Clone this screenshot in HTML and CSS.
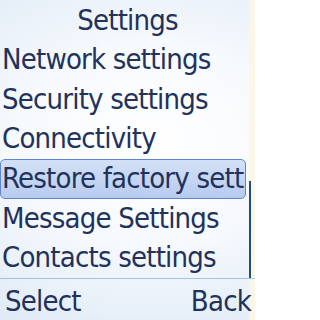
FILE: index.html
```html
<!DOCTYPE html>
<html>
<head>
<meta charset="utf-8">
<link rel="stylesheet" href="styles.css">
</head>
<body>
<div class="screen">
  <div class="title">Settings</div>
  <div class="menu">
    <ul class="list">
      <li class="item">Network settings</li>
      <li class="item">Security settings</li>
      <li class="item">Connectivity</li>
      <li class="item selected">Restore factory sett</li>
      <li class="item">Message Settings</li>
      <li class="item">Contacts settings</li>
    </ul>
    <div class="scroll"><div class="thumb"></div></div>
  </div>
  <div class="softkeys">
    <span class="key">Select</span>
    <span class="key">Back</span>
  </div>
</div>
</body>
</html>
```
FILE: styles.css
```css
html, body {
  margin: 0;
  padding: 0;
}
body {
  width: 255px;
  height: 320px;
  overflow: hidden;
}
.screen {
  width: 255px;
  height: 320px;
  display: flex;
  flex-direction: column;
  font-family: "DejaVu Sans Condensed", "DejaVu Sans", sans-serif;
  font-size: 29px;
  letter-spacing: -0.8px;
  color: #22325a;
  background:
    linear-gradient(90deg, rgba(255,255,255,0) 97%, #fbf6e6 98.5%),
    radial-gradient(ellipse 120% 70% at 60% 45%, #ffffff 0%, #f6f9fd 45%, #dce8f5 100%);
}
.title {
  height: 40px;
  line-height: 40px;
  text-align: center;
  flex: none;
}
.menu {
  flex: none;
  height: 238px;
  display: flex;
}
.list {
  list-style: none;
  margin: 0;
  padding: 0;
  width: 248px;
  display: flex;
  flex-direction: column;
}
.item {
  height: 39.67px;
  line-height: 39px;
  padding-left: 2px;
  white-space: nowrap;
  overflow: hidden;
  box-sizing: border-box;
}
.item.selected {
  border: 1px solid #5f85cf;
  border-radius: 5px;
  background: linear-gradient(#d3e1f6, #b7cbee);
  line-height: 37px;
  padding-left: 1px;
  margin-right: 2px;
}
.scroll {
  flex: 1;
  display: flex;
  flex-direction: column;
  justify-content: flex-end;
  align-items: center;
}
.thumb {
  width: 2px;
  height: 97px;
  background: #1b4f86;
  margin-right: 3px;
}
.softkeys {
  flex: 1;
  border-top: 1px solid #a9c1e0;
  display: flex;
  justify-content: space-between;
  align-items: center;
  padding: 2px 4px 0 5px;
}
```
